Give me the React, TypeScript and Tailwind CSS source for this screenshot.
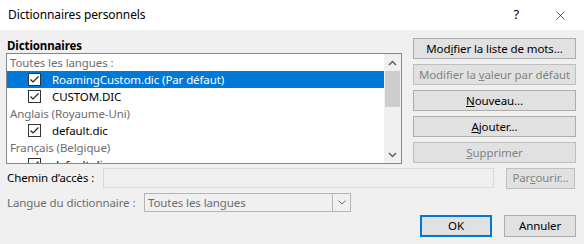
import { X } from "lucide-react";

const font = { fontFamily: '"Segoe UI", "Noto Sans", sans-serif' };

function Check() {
  return (
    <span className="w-[13px] h-[13px] border border-[#333333] bg-white flex items-center justify-center shrink-0">
      <svg width="11" height="11" viewBox="0 0 11 11">
        <path d="M1.5 5.5 L4 8 L9.5 2.5" fill="none" stroke="#222" strokeWidth="1.2" />
      </svg>
    </span>
  );
}

// rows of the dictionary list
const rows = [
  { kind: "head", text: "Toutes les langues :" },
  { kind: "item", text: "RoamingCustom.dic (Par défaut)", selected: true },
  { kind: "item", text: "CUSTOM.DIC" },
  { kind: "head", text: "Anglais (Royaume-Uni)" },
  { kind: "item", text: "default.dic" },
  { kind: "head", text: "Français (Belgique)" },
  { kind: "item", text: "default.dic" },
];

function Btn({
  children,
  disabled,
  className = "",
}: {
  children: React.ReactNode;
  disabled?: boolean;
  className?: string;
}) {
  return (
    <div
      className={`h-[21px] flex items-center justify-center border bg-[#e1e1e1] ${
        disabled ? "border-[#bfbfbf] text-[#838383]" : "border-[#adadad] text-black"
      } ${className}`}
    >
      <span>{children}</span>
    </div>
  );
}

export default function App() {
  return (
    <div
      className="w-[584px] h-[244px] overflow-hidden bg-[#f0f0f0] text-[11.5px] tracking-[-0.1px]"
      style={font}
    >
      {/* title bar */}
      <div className="h-[30px] bg-white flex items-center pl-[8px]">
        <span className="text-[12px] text-black">Dictionnaires personnels</span>
        <span className="ml-auto text-[13px] text-black mr-[34px]">?</span>
        <X size={15} strokeWidth={1} className="mr-[16px] text-black" />
      </div>

      <div className="flex pl-[6px] pt-[8px]">
        {/* left column */}
        <div className="w-[396px] flex flex-col">
          <div className="h-[15px] leading-[15px] font-bold pl-[1px]">Dictionnaires</div>
          <div className="h-[111px] border border-[#828790] bg-white flex overflow-hidden">
            <div className="flex-1 flex flex-col overflow-hidden">
              {rows.map((r, i) =>
                r.kind === "head" ? (
                  <div key={i} className="h-[17px] shrink-0 flex items-center pl-[3px] text-[#6d6d6d]">
                    {r.text}
                  </div>
                ) : (
                  <div
                    key={i}
                    className={`h-[17px] shrink-0 flex items-center pl-[21px] ${
                      r.selected ? "bg-[#0078d7] text-white" : "text-black"
                    }`}
                  >
                    <Check />
                    <span className="ml-[11px]">{r.text}</span>
                  </div>
                )
              )}
            </div>
            {/* scrollbar */}
            <div className="w-[17px] bg-[#f0f0f0] flex flex-col items-center">
              <div className="h-[17px] flex items-center justify-center">
                <svg width="9" height="6" viewBox="0 0 9 6">
                  <path d="M1 5 L4.5 1.5 L8 5" fill="none" stroke="#606060" strokeWidth="1.5" />
                </svg>
              </div>
              <div className="w-[15px] h-[36px] bg-[#cdcdcd]" />
              <div className="flex-1" />
              <div className="h-[17px] flex items-center justify-center">
                <svg width="9" height="6" viewBox="0 0 9 6">
                  <path d="M1 1 L4.5 4.5 L8 1" fill="none" stroke="#606060" strokeWidth="1.5" />
                </svg>
              </div>
            </div>
          </div>
        </div>

        {/* right column */}
        <div className="ml-[11px] w-[163px] flex flex-col gap-[5px]">
          <Btn>
            Mod<u>i</u>fier la liste de mots...
          </Btn>
          <Btn disabled>
            Modifier la <u>v</u>aleur par défaut
          </Btn>
          <Btn>
            <u>N</u>ouveau...
          </Btn>
          <Btn>
            <u>A</u>jouter...
          </Btn>
          <Btn disabled>
            <u>S</u>upprimer
          </Btn>
        </div>
      </div>

      {/* path row */}
      <div className="flex items-center pl-[7px] mt-[3px] h-[22px]">
        <span className="w-[96px] text-black">Chemin d’accès :</span>
        <div className="w-[391px] h-[20px] border border-[#d9d9d9] bg-[#f0f0f0]" />
        <Btn disabled className="ml-[12px] w-[69px]">
          Par<u>c</u>ourir...
        </Btn>
      </div>

      {/* language row */}
      <div className="flex items-center pl-[7px] mt-[4px] h-[19px]">
        <span className="w-[137px] text-[#6d6d6d]">
          Lan<u>g</u>ue du dictionnaire :
        </span>
        <div className="w-[207px] h-[19px] border border-[#b5b5b5] bg-[#f0f0f0] flex items-center">
          <span className="flex-1 pl-[3px] text-[#6d6d6d]">Toutes les langues</span>
          <div className="w-[18px] h-full border-l border-[#b5b5b5] flex items-center justify-center">
            <svg width="8" height="5" viewBox="0 0 8 5">
              <path d="M0.5 0.5 L4 4 L7.5 0.5" fill="none" stroke="#6d6d6d" strokeWidth="1" />
            </svg>
          </div>
        </div>
      </div>

      {/* OK / Annuler */}
      <div className="flex justify-end pr-[8px] mt-[3px] gap-[12px]">
        <div className="w-[72px] h-[22px] border-2 border-[#0078d7] bg-[#e1e1e1] flex items-center justify-center text-black">
          OK
        </div>
        <div className="w-[72px] h-[22px] border border-[#adadad] bg-[#e1e1e1] flex items-center justify-center text-black">
          Annuler
        </div>
      </div>
    </div>
  );
}
